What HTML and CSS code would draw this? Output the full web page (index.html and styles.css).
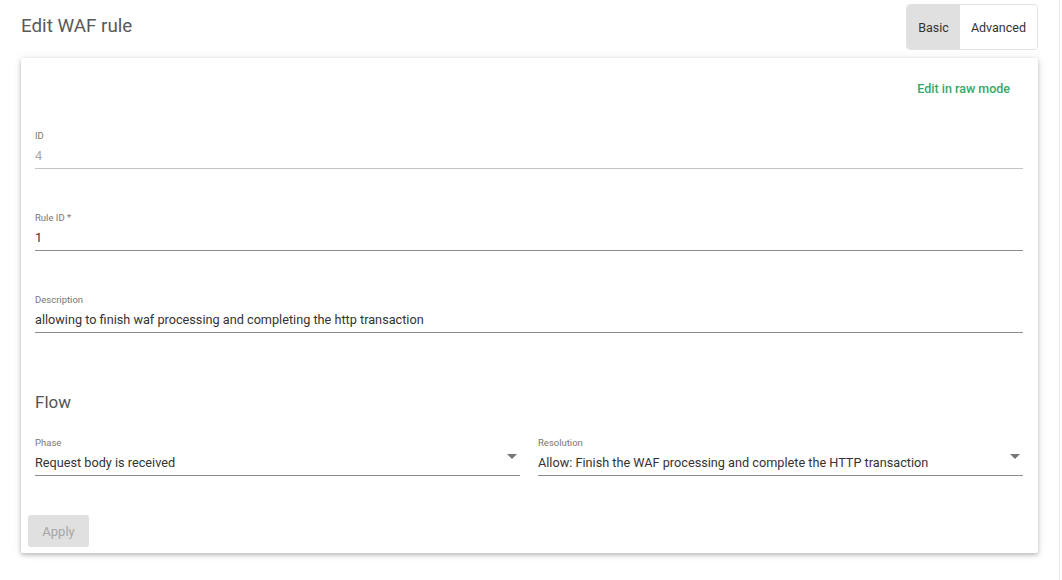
FILE: index.html
```html
<!DOCTYPE html>
<html lang="en">
<head>
    <meta charset="UTF-8">
    <meta name="viewport" content="width=device-width, initial-scale=1.0">
    <title>Edit WAF rule</title>
    <link rel="stylesheet" href="styles.css">
</head>
<body>
    <div class="page">
        <div class="page-header">
            <h1>Edit WAF rule</h1>
            <div class="mode-toggle">
                <button type="button" class="active">Basic</button>
                <button type="button">Advanced</button>
            </div>
        </div>

        <div class="card">
            <div class="card-actions-top">
                <button type="button" class="link-button">Edit in raw mode</button>
            </div>

            <div class="field disabled">
                <label>ID</label>
                <div class="value">4</div>
            </div>

            <div class="field">
                <label>Rule ID *</label>
                <div class="value">1</div>
            </div>

            <div class="field">
                <label>Description</label>
                <div class="value">allowing to finish waf processing and completing the http transaction</div>
            </div>

            <h2>Flow</h2>

            <div class="field-row">
                <div class="field select">
                    <label>Phase</label>
                    <div class="value">Request body is received</div>
                    <span class="arrow"></span>
                </div>
                <div class="field select">
                    <label>Resolution</label>
                    <div class="value">Allow: Finish the WAF processing and complete the HTTP transaction</div>
                    <span class="arrow"></span>
                </div>
            </div>

            <div class="card-footer">
                <button type="button" class="apply" disabled>Apply</button>
            </div>
        </div>
    </div>
    <div class="scroll-track"></div>
</body>
</html>
```

FILE: styles.css
```css
body {
    font-family: Roboto, "Liberation Sans", sans-serif;
    background-color: #fff;
    margin: 0;
    display: flex;
    min-height: 100vh;
    color: #333;
}
.page {
    flex: 1;
    padding: 0 21px 0 21px;
}
.scroll-track {
    width: 2px;
    border-left: 1px solid #e6e6e6;
}
.page-header {
    display: flex;
    justify-content: space-between;
    align-items: flex-start;
    height: 58px;
}
h1 {
    margin: 14px 0 0 0;
    font-size: 18.8px;
    font-weight: 400;
    line-height: 24px;
    color: #595959;
}
.mode-toggle {
    display: flex;
    margin-top: 4px;
    height: 44px;
    border: 1px solid #e2e2e2;
    border-radius: 4px;
    overflow: hidden;
}
.mode-toggle button {
    border: none;
    background-color: #fff;
    font-family: inherit;
    font-size: 12.5px;
    color: #333;
    padding: 0 11px;
    cursor: pointer;
}
.mode-toggle button.active {
    background-color: #e0e0e0;
}
.card {
    background-color: #fff;
    border-radius: 2px;
    box-shadow: 0 2px 4px rgba(0, 0, 0, 0.22), 0 1px 10px rgba(0, 0, 0, 0.1);
    padding: 16px 15px 0 14px;
    height: 495px;
    box-sizing: border-box;
}
.card-actions-top {
    display: flex;
    justify-content: flex-end;
    height: 28px;
}
.link-button {
    border: none;
    background: none;
    font-family: inherit;
    font-size: 12.5px;
    font-weight: 500;
    color: #35a86b;
    line-height: 30px;
    padding: 0 13px 0 0;
    cursor: pointer;
}
.field {
    position: relative;
    margin-top: 43px;
    border-bottom: 1px solid #8c8c8c;
}
.card-actions-top + .field {
    margin-top: 28px;
}
.field label {
    display: block;
    font-size: 9.5px;
    line-height: 12px;
    color: #777;
}
.field .value {
    font-size: 12.7px;
    line-height: 20px;
    margin-top: 4px;
    padding-bottom: 2px;
    white-space: nowrap;
}
.field.disabled {
    border-bottom-color: #c4c4c4;
}
.field.disabled .value {
    color: #a8a8a8;
}
h2 {
    margin: 57px 0 0 0;
    font-size: 17px;
    font-weight: 400;
    line-height: 24px;
    color: #555;
}
.field-row {
    display: flex;
    gap: 18px;
    margin-top: 23px;
}
.field-row .field {
    flex: 1;
    margin-top: 0;
}
.field.select .arrow {
    position: absolute;
    right: 3px;
    top: 17px;
    width: 0;
    height: 0;
    border-left: 5px solid transparent;
    border-right: 5px solid transparent;
    border-top: 5px solid #757575;
}
.card-footer {
    margin: 39px 0 0 -7px;
}
.apply {
    width: 61px;
    height: 32px;
    border: none;
    border-radius: 3px;
    background-color: #e0e0e0;
    color: #a6a6a6;
    font-family: inherit;
    font-size: 13px;
}
```
